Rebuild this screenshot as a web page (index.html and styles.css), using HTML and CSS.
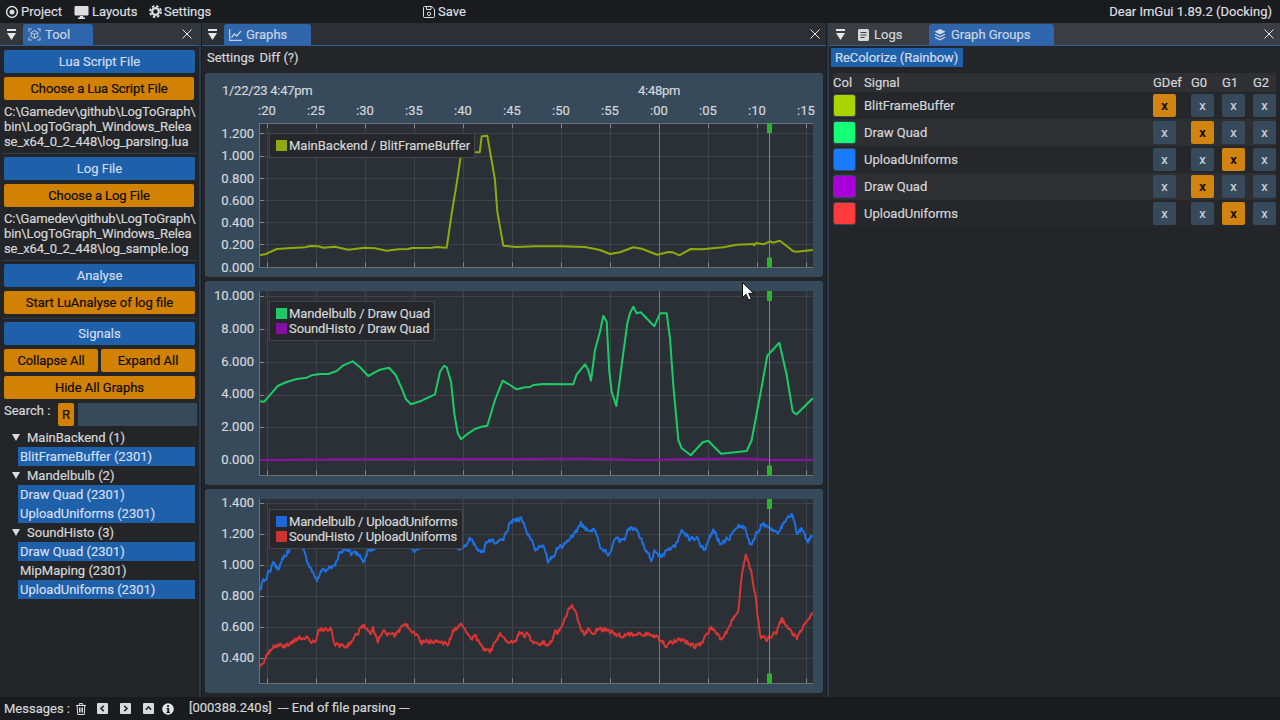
FILE: index.html
```html
<!DOCTYPE html>
<html lang="en">
<head>
<meta charset="utf-8">
<title>LogToGraph</title>
<link rel="stylesheet" href="styles.css">
</head>
<body>
<div class="menubar">
  <div class="menu-left">
    <span class="menu-item"><svg class="ic ic-project" viewBox="0 0 14 14" width="14" height="14"><circle cx="7" cy="7" r="5.4" fill="none" stroke="currentColor" stroke-width="1.5"/><circle cx="7" cy="7" r="2.5" fill="currentColor"/></svg>Project</span>
    <span class="menu-item"><svg class="ic" viewBox="0 0 15 14" width="15" height="14"><path d="M1 1.500h13v8.500H1z" fill="currentColor" stroke="currentColor"/><path d="M6 11h3l.5 1.500H11V14H4v-1.500h1.500z" fill="currentColor"/></svg>Layouts</span>
    <span class="menu-item menu-settings"><svg class="ic ic-gear" viewBox="0 0 14 14" width="13" height="13"><circle cx="7" cy="7" r="3.600" fill="none" stroke="currentColor" stroke-width="2.400"/><circle cx="7" cy="7" r="5.900" fill="none" stroke="currentColor" stroke-width="2" stroke-dasharray="2.700 1.930"/></svg>Settings</span>
  </div>
  <span class="menu-item"><svg class="ic" viewBox="0 0 12 12" width="12" height="12"><path d="M1.500.5h7.300l2.700 2.700v7.300a1 1 0 0 1-1 1h-9a1 1 0 0 1-1-1v-9a1 1 0 0 1 1-1z" fill="none" stroke="currentColor"/><path d="M3.500 1v2.500h4.500V1" fill="none" stroke="currentColor"/><circle cx="6" cy="7.800" r="1.700" fill="none" stroke="currentColor"/></svg>Save</span>
  <span class="menu-right">Dear ImGui 1.89.2 (Docking)</span>
</div>

<div class="dock">
  <section class="pane pane-tool">
    <header class="tabbar tabbar-tool">
      <svg class="tab-menu" viewBox="0 0 9 11" width="9" height="11"><path d="M0 0h9v2H0zM0 4h9L4.500 11z" fill="#e4e6e8"/></svg>
      <span class="tab tab-on tab-tool"><svg class="ic" viewBox="0 0 14 14" width="13" height="13"><path d="M1 4V1h3M10 1h3v3M13 10v3h-3M4 13H1v-3" fill="none" stroke="#b9c6d6" stroke-width="1.100"/><path d="M7 2.800l3.700 2.100v4.200L7 11.200 3.300 9.100V4.900zM3.300 4.900L7 7l3.700-2.100M7 7v4.200" fill="none" stroke="#b9c6d6" stroke-width="1.100"/></svg>Tool</span>
      <svg class="tab-close" viewBox="0 0 10 10" width="10" height="10"><path d="M.5.500l9 9M9.500.500l-9 9" stroke="#e4e6e8" fill="none"/></svg>
    </header>
    <div class="tool-body">
      <div class="btn btn-blue">Lua Script File</div>
      <div class="btn btn-orange btn-short tight">Choose a Lua Script File</div>
      <div class="path">C:\Gamedev\github\LogToGraph\<br>bin\LogToGraph_Windows_Relea<br>se_x64_0_2_448\log_parsing.lua</div>
      <div class="sep"></div>
      <div class="btn btn-blue">Log File</div>
      <div class="btn btn-orange btn-short tight">Choose a Log File</div>
      <div class="path">C:\Gamedev\github\LogToGraph\<br>bin\LogToGraph_Windows_Relea<br>se_x64_0_2_448\log_sample.log</div>
      <div class="sep"></div>
      <div class="btn btn-blue">Analyse</div>
      <div class="btn btn-orange">Start LuAnalyse of log file</div>
      <div class="sep"></div>
      <div class="btn btn-blue">Signals</div>
      <div class="btn-pair">
        <div class="btn btn-orange tight">Collapse All</div>
        <div class="btn btn-orange">Expand All</div>
      </div>
      <div class="btn btn-orange">Hide All Graphs</div>
      <div class="search">
        <span class="search-label">Search :</span>
        <span class="btn btn-orange btn-r">R</span>
        <span class="search-input"></span>
      </div>
      <div class="tree">
        <div class="tree-head"><i class="tri"></i>MainBackend (1)</div>
        <div class="leaf leaf-on">BlitFrameBuffer (2301)</div>
        <div class="tree-head"><i class="tri"></i>Mandelbulb (2)</div>
        <div class="leaf leaf-on">Draw Quad (2301)</div>
        <div class="leaf leaf-on">UploadUniforms (2301)</div>
        <div class="tree-head"><i class="tri"></i>SoundHisto (3)</div>
        <div class="leaf leaf-on">Draw Quad (2301)</div>
        <div class="leaf">MipMaping (2301)</div>
        <div class="leaf leaf-on">UploadUniforms (2301)</div>
      </div>
    </div>
  </section>

  <section class="pane pane-graphs">
    <header class="tabbar tabbar-graphs">
      <svg class="tab-menu" viewBox="0 0 9 11" width="9" height="11"><path d="M0 0h9v2H0zM0 4h9L4.500 11z" fill="#e4e6e8"/></svg>
      <span class="tab tab-on tab-graphs"><svg class="ic" viewBox="0 0 13 12" width="13" height="12"><path d="M.7 0v11.300H13" fill="none" stroke="#c4d0dd" stroke-width="1.200"/><path d="M2.500 8.500l3-3.500 2.200 2L12 2" fill="none" stroke="#c4d0dd" stroke-width="1.300"/></svg>Graphs</span>
      <svg class="tab-close" viewBox="0 0 10 10" width="10" height="10"><path d="M.5.500l9 9M9.500.500l-9 9" stroke="#e4e6e8" fill="none"/></svg>
    </header>
    <div class="graph-menu"><span>Settings</span><span>Diff (?)</span></div>
    <div class="plots">
      <article class="plot">
        <div class="dates"><span>1/22/23 4:47pm</span><span>4:48pm</span></div>
        <div class="xaxis"><span>:20</span><span>:25</span><span>:30</span><span>:35</span><span>:40</span><span>:45</span><span>:50</span><span>:55</span><span>:00</span><span>:05</span><span>:10</span><span>:15</span></div>
        <div class="plot-row">
          <div class="yaxis yaxis-a"><span>1.200</span><span>1.000</span><span>0.800</span><span>0.600</span><span>0.400</span><span>0.200</span><span>0.000</span></div>
          <div class="area area-short">
            <svg class="chart" data-chart="a" width="554" height="145" viewBox="259 123 554 145"></svg>
            <div class="legend"><div class="leg-row"><i class="sw sw-lime"></i>MainBackend / BlitFrameBuffer</div></div>
          </div>
        </div>
      </article>
      <article class="plot">
        <div class="plot-row">
          <div class="yaxis yaxis-b"><span>10.000</span><span>8.000</span><span>6.000</span><span>4.000</span><span>2.000</span><span>0.000</span></div>
          <div class="area">
            <svg class="chart" data-chart="b" width="554" height="185" viewBox="259 291 554 185"></svg>
            <div class="legend leg-mid"><div class="leg-row"><i class="sw sw-green"></i>Mandelbulb / Draw Quad</div><div class="leg-row"><i class="sw sw-purple"></i>SoundHisto / Draw Quad</div></div>
          </div>
        </div>
      </article>
      <article class="plot">
        <div class="plot-row">
          <div class="yaxis yaxis-c"><span>1.400</span><span>1.200</span><span>1.000</span><span>0.800</span><span>0.600</span><span>0.400</span></div>
          <div class="area">
            <svg class="chart" data-chart="c" width="554" height="185" viewBox="259 499 554 185"></svg>
            <div class="legend leg-tight"><div class="leg-row"><i class="sw sw-blue"></i>Mandelbulb / UploadUniforms</div><div class="leg-row"><i class="sw sw-red"></i>SoundHisto / UploadUniforms</div></div>
          </div>
        </div>
      </article>
    </div>
  </section>

  <section class="pane pane-groups">
    <header class="tabbar tabbar-groups">
      <svg class="tab-menu" viewBox="0 0 9 11" width="9" height="11"><path d="M0 0h9v2H0zM0 4h9L4.500 11z" fill="#e4e6e8"/></svg>
      <span class="tab tab-logs"><svg class="ic" viewBox="0 0 11 12" width="11" height="12"><path d="M1.500 0h8A1.500 1.500 0 0 1 11 1.500v9A1.500 1.500 0 0 1 9.500 12h-8A1.500 1.500 0 0 1 0 10.500v-9A1.500 1.500 0 0 1 1.500 0z" fill="#d6d8da"/><path d="M2.500 3.500h6M2.500 6h6M2.500 8.500h4" stroke="#3a3e42" stroke-width="1.100"/></svg>Logs</span>
      <span class="tab tab-on tab-groups"><svg class="ic" viewBox="0 0 12 12" width="12" height="12"><path d="M6 0l5.500 2.700L6 5.400.5 2.700z" fill="#d0d9e4"/><path d="M1 5.300L6 7.800l5-2.500M1 8.200L6 10.800l5-2.600" fill="none" stroke="#d0d9e4" stroke-width="1.200"/></svg>Graph Groups</span>
      <svg class="tab-close" viewBox="0 0 10 10" width="10" height="10"><path d="M.5.500l9 9M9.500.500l-9 9" stroke="#e4e6e8" fill="none"/></svg>
    </header>
    <div class="groups-body">
      <div class="recolor">ReColorize (Rainbow)</div>
      <div class="gtable">
        <div class="grow ghead"><span>Col</span><span>Signal</span><span>GDef</span><span>G0</span><span>G1</span><span>G2</span></div>
        <div class="grow"><i class="cswatch c-lime"></i><span>BlitFrameBuffer</span><b class="xb xb-on">x</b><b class="xb">x</b><b class="xb">x</b><b class="xb">x</b></div>
        <div class="grow grow-alt"><i class="cswatch c-green"></i><span>Draw Quad</span><b class="xb">x</b><b class="xb xb-on">x</b><b class="xb">x</b><b class="xb">x</b></div>
        <div class="grow"><i class="cswatch c-blue"></i><span>UploadUniforms</span><b class="xb">x</b><b class="xb">x</b><b class="xb xb-on">x</b><b class="xb">x</b></div>
        <div class="grow grow-alt"><i class="cswatch c-purple"></i><span>Draw Quad</span><b class="xb">x</b><b class="xb xb-on">x</b><b class="xb">x</b><b class="xb">x</b></div>
        <div class="grow"><i class="cswatch c-red"></i><span>UploadUniforms</span><b class="xb">x</b><b class="xb">x</b><b class="xb xb-on">x</b><b class="xb">x</b></div>
      </div>
    </div>
  </section>
</div>

<footer class="status">
  <span class="msg-label">Messages :</span>
  <svg class="st-trash" viewBox="0 0 10 12" width="10" height="12"><path d="M0 2.500h10M3.300 2.300V.6h3.400v1.700M1.200 2.500l.5 9h6.600l.5-9M3.500 4.500v5M5 4.500v5M6.500 4.500v5" fill="none" stroke="#dcdee0"/></svg>
  <span class="st-box st-b1"><svg viewBox="0 0 11 11" width="11" height="11"><path d="M6.800 2.800L4 5.500l2.800 2.700" fill="none" stroke="#26282b" stroke-width="1.600"/></svg></span>
  <span class="st-box st-b2"><svg viewBox="0 0 11 11" width="11" height="11"><path d="M4.200 2.800L7 5.500 4.200 8.200" fill="none" stroke="#26282b" stroke-width="1.600"/></svg></span>
  <span class="st-box st-b3"><svg viewBox="0 0 11 11" width="11" height="11"><path d="M2.800 6.800L5.500 4l2.700 2.800" fill="none" stroke="#26282b" stroke-width="1.600"/></svg></span>
  <svg class="st-info" viewBox="0 0 12 12" width="12" height="12"><circle cx="6" cy="6" r="5.800" fill="#e2e4e6"/><path d="M5 2.300h2v1.800H5zM4.500 5h2.700v3.700h.8V10H4.300V8.700h1V6.300h-.8z" fill="#1c1e22"/></svg>
  <span class="st-time">[000388.240s]</span>
  <span class="st-text">--- End of file parsing ---</span>
</footer>

<svg class="pointer" viewBox="0 0 12 20" width="12" height="20"><path d="M.5.500v15l3.600-3.300 2.500 5.800 2.600-1.100-2.500-5.600h4.800z" fill="#fff" stroke="#111" stroke-width="1"/></svg>
<script src="plots.js"></script>
</body>
</html>
```
FILE: styles.css
```css
* { box-sizing: border-box; }
html, body { margin: 0; padding: 0; }
body {
  width: 1280px;
  height: 720px;
  overflow: hidden;
  position: relative;
  display: flex;
  flex-direction: column;
  background: #1a1c1f;
  color: #d4d6d8;
  font: 13px/15px Roboto, "Liberation Sans", sans-serif;
  -webkit-text-stroke: 0.2px;
}
svg { display: block; flex: none; }
.ic { margin-right: 3px; }
.ic-project { margin-right: 2px; }
.ic-gear { margin-right: 2.500px; }
.tight { letter-spacing: -0.08px; }

.menubar {
  height: 23px;
  flex: none;
  display: flex;
  align-items: center;
  padding: 0 8px 0 5px;
  background: #191b1e;
  color: #dcdee0;
}
.menu-left { width: 418px; display: flex; gap: 12px; }
.menu-item { display: flex; align-items: center; }
.menu-settings { margin-left: -1px; letter-spacing: -0.05px; }
.menu-right { margin-left: auto; }

.dock { flex: none; height: 674px; display: flex; }
.pane { background: #232528; height: 100%; display: flex; flex-direction: column; }
.pane-tool { width: 201px; border-right: 2px solid #283a4d; }
.pane-graphs { width: 624px; margin: 0 1px; }
.pane-groups { flex: 1; border-left: 2px solid #283a4d; }

.tabbar {
  height: 23px;
  flex: none;
  display: flex;
  align-items: flex-end;
  position: relative;
  border-bottom: 1px solid #2d5e9e;
}
.tabbar-tool { background: #33373b; }
.tabbar-graphs { background: #2c3034; }
.tabbar-groups { background: #3a3e42; }
.tab-menu { position: absolute; left: 7px; top: 6px; }
.tabbar-graphs .tab-menu { left: 6px; }
.tab-close { position: absolute; right: 6px; top: 6px; }
.tabbar-tool .tab-close { right: 7px; }
.tab {
  height: 21px;
  display: flex;
  align-items: center;
  padding-left: 5px;
  border-radius: 3px 3px 0 0;
  color: #d4d6d8;
}
.tab-on { background: #2f66ab; color: #c9d5e3; }
.tab-tool { margin-left: 23px; width: 70px; gap: 1px; }
.tab-graphs { margin-left: 22px; width: 87px; gap: 1px; }
.tab-logs { margin-left: 29px; width: 71px; padding-left: 0; gap: 2px; }
.tab-groups { width: 125px; gap: 2px; }

.tool-body { padding: 4px 0 0 4px; display: flex; flex-direction: column; gap: 4px; }
.btn {
  height: 23px;
  width: 191px;
  border-radius: 2px;
  display: flex;
  align-items: center;
  justify-content: center;
  flex: none;
}
.btn-blue { background: #1f60ab; color: #cfdcec; }
.btn-orange { background: #d18104; color: #0d0a04; }
.btn-short { width: 190px; }
.btn-pair { display: flex; gap: 3px; }
.btn-pair .btn { width: 94px; }
.path { white-space: nowrap; height: 45px; letter-spacing: -0.11px; }
.sep { height: 1px; margin-bottom: -1px; width: 195px; margin-left: -2px; background: #2e3d4d; }

.search { display: flex; align-items: flex-start; }
.search-label { width: 54px; }
.btn-r { width: 16px; }
.search-input { width: 119px; height: 23px; margin-left: 4px; background: #364a5c; }

.tree { margin-top: -2px; }
.tree-head { height: 19px; display: flex; align-items: center; padding-left: 23px; position: relative; }
.tri {
  position: absolute;
  left: 8px;
  top: 6px;
  border: 4px solid transparent;
  border-top: 7px solid #d8dadc;
  border-bottom: 0;
}
.leaf { height: 19px; width: 177px; margin-left: 14px; padding-left: 2px; display: flex; align-items: center; }
.leaf-on { background: #1f60ab; color: #d3dfee; }

.graph-menu { height: 27px; flex: none; display: flex; gap: 5px; padding: 4px 0 0 5px; }
.plots { display: flex; flex-direction: column; gap: 4px; padding: 0 3px; }
.plot {
  height: 204px;
  background: #364a5c;
  border-radius: 3px;
  padding: 10px 0 9px;
  display: flex;
  flex-direction: column;
}
.dates { display: grid; grid-template-columns: 416px 1fr; padding-left: 17px; height: 15px; letter-spacing: -0.28px; }
.xaxis { display: flex; margin: 5px 0 5px 37.500px; height: 15px; }
.xaxis span { flex: none; width: 49px; text-align: center; }
.plot-row { display: flex; }
.yaxis { width: 54px; height: 0; padding-right: 5px; display: flex; flex-direction: column; align-items: flex-end; flex: none; }
.yaxis-a span { line-height: 22.3px; height: 22.3px; flex: none; }
.yaxis-b { margin-top: -11px; }
.yaxis-b span { line-height: 32.8px; height: 32.8px; flex: none; }
.yaxis-c { margin-top: -12px; }
.yaxis-c span { line-height: 31px; height: 31px; flex: none; }
.area { position: relative; width: 554px; height: 185px; }
.area-short { height: 145px; }
.legend {
  position: absolute;
  left: 10px;
  top: 10px;
  padding: 4px 4px 4px 6px;
  background: #25272b;
  border: 1px solid #43474c;
}
.leg-mid { letter-spacing: -0.09px; }
.leg-tight { letter-spacing: -0.19px; }
.leg-row { display: flex; align-items: center; height: 15px; white-space: nowrap; gap: 2px; }
.sw { width: 11px; height: 11px; flex: none; }
.sw-lime { background: #8fa813; }
.sw-green { background: #1fc96a; }
.sw-purple { background: #850fa0; }
.sw-blue { background: #2066d6; }
.sw-red { background: #cc3333; }

.groups-body { padding: 2px 0 0 2px; }
.recolor { width: 132px; height: 19px; background: #1f60ab; color: #cfdcec; padding-left: 4px; display: flex; align-items: center; letter-spacing: -0.05px; }
.gtable { margin: 6px 0 0 2px; width: 443px; }
.grow {
  display: grid;
  grid-template-columns: 31px 289px 38px 31px 31px 23px;
  height: 27px;
  align-items: center;
  background: #25272b;
}
.grow-alt { background: #2d2f33; }
.ghead { height: 19px; background: #2f3033; }
.cswatch { width: 23px; height: 23px; border-radius: 3px; border: 1px solid #364a5c; display: block; }
.c-lime { background: #a9d400; }
.c-green { background: #15ff77; }
.c-blue { background: #1a7bff; }
.c-purple { background: #a800d8; }
.c-red { background: #ff3b3b; }
.xb {
  width: 23px;
  height: 23px;
  border-radius: 2px;
  background: #364a5c;
  font-weight: 400;
  display: flex;
  align-items: center;
  justify-content: center;
}
.xb-on { background: #d18410; color: #0d0a04; font-weight: 500; }

.status {
  flex: none;
  height: 23px;
  display: flex;
  align-items: center;
  padding-left: 4px;
  background: #191b1e;
}
.msg-label { width: 72px; }
.st-box { width: 11px; height: 11px; background: #d8dadc; border-radius: 1px; flex: none; display: block; margin-top: -1px; }
.st-b1 { margin-left: 11px; }
.st-b2 { margin-left: 12px; }
.st-b3 { margin-left: 12px; }
.st-info { margin-left: 8px; }
.st-time { margin-left: 15px; margin-top: -3px; }
.st-text { margin-left: 6px; margin-top: -3px; }

.pointer { position: absolute; left: 742px; top: 282px; }
```
FILE: plots.js
```js
(function () {
  var NS = 'http://www.w3.org/2000/svg';
  var XT = [267.5, 316.5, 365.5, 414.5, 463.5, 512.5, 561.5, 610.5, 659.5, 708.5, 757.5, 806.5];

  var L1 = [259,255.3,265,254.3,276.7,249,291.7,248,305,247.3,310,246,318.3,246.3,323.3,247.7,335,246.7,348.3,249.7,365,247.7,375,248.3,386.7,250.7,398.3,249.3,408.3,249,411.7,248,431.7,247.7,436.7,247,446.7,247.7,451.7,213.3,456.7,183.3,461.7,150,465,135,472,151,474.3,152,479.7,152.3,481.7,136.3,487.3,135.7,495,180,497.3,211.7,503.3,245.7,516.7,247,535,246.3,561,246.3,585,247,600,250,610,254,620,252.3,633.3,247.3,641.7,248.7,657.3,254.7,668.3,252,673,252.300,679.3,255.3,690.7,249,701.7,249.3,723.3,247.3,736.7,244.7,753.3,244,754.300,245.300,756,243,763.3,244.3,770,241.3,772.700,242.700,780,240.7,793.3,251.3,796.7,251.7,812.7,250];
  var L2 = [259.3,401.3,264.3,401.7,277.7,386,286.7,382,296.7,379,306.7,377.7,311.7,375.3,320,374,328.3,374,336.7,371,343.3,365.3,352.7,361.3,360,367.3,368.3,376,380,369.7,389,367.7,395.7,375,401.7,388.3,406,399.3,411,404.3,421.7,400.7,435,394.3,440,371.7,444,365.7,446.7,367.3,451,381.7,454.3,413.3,457.7,433.3,461,439.3,468.3,433.3,475,429,481.7,426.7,487.3,425.7,495,400,502.7,380.7,510,385,516.7,389.3,525,387.3,530,387,533.3,385,543.3,384,573.3,384.3,576.7,374.3,585,364.3,588.3,370,591,380.7,595,350,600,331.7,603.3,315.7,606.7,321.7,609.3,371.7,611.7,391.7,616.3,406,621.7,365,627.3,323.3,630,313.3,633.3,306.7,636.7,313.3,640.7,312.3,654.3,326.3,660,313.3,666.7,313.3,670,338.3,673.3,385,678.3,440,681.7,448.3,690.7,455.3,702.7,442.3,708.3,440.7,721,453.7,746.7,451,751.7,440,761.7,386.7,767.3,355.7,779.3,342.7,786.7,375,792.7,411.7,796.7,414.3,812.7,398.3];
  var L3 = [259,460,330,459.500,420,459,520,459,580,458.500,640,460,700,459,750,458.500,770,460,812.700,459.700];
  var L4 = [259.3,590,268.3,573.3,273.3,564,278.3,568.3,284.3,555,289,550,295,537,303.3,550,310,568.3,316.7,582,321.7,570,335,566,340,553.3,346.7,548,351.7,553,360,555,362.7,563.3,368.3,550,373.3,548,388,533,415,550,440,535,456.7,549,463.3,546.7,470,540,476.7,548.3,483.3,552.7,486.7,541.7,500,542.3,505,535,510,521.7,521.7,518.3,526.7,530,531.7,541.7,536.7,550,543.3,545,548.3,562.7,556.7,550,570,540,581,524.3,590,533.3,594,526,600,545,608.3,555,615,540,625,540.7,628.3,528.3,636.7,531.7,651.7,559.3,655,550,659.3,557.3,675,545,683.3,530,690,540,696.7,536.7,704.3,550,713.3,529.3,720,543.3,730,536.7,736,525,745,528.3,750,545,761.7,524.3,770,526.7,778.3,535,783.3,523.3,792.7,515,796.7,535,801.7,528.3,806.7,540.7,812.7,536.7];
  var L5 = [259.3,668.3,266.7,656.7,273.3,646,286.7,646,295,640,305,636.7,315,644,319,628.3,331.7,630,334.3,644,346.7,646.7,355,636.7,363.3,624.3,370,635,372.7,628.3,377.7,641.7,383.3,631.7,395,635,405,624.3,415,633.3,421.7,642.7,435,640.7,448.3,645,452.3,631.7,462.3,624,470,638.3,475,636.7,483.3,648.3,490,651.7,500,635,508.3,640.7,515,640.7,520,633,528.3,635,531.7,641.7,550,643.3,555,633.3,560,630,565,615,572.7,606,579.3,623.3,585,636.7,588.3,630,591.7,634,596.7,629,608.3,630,620,636,636.7,633.3,651.7,634,666.7,645,680,638.3,693.3,646,701.7,644,711.7,626.7,720,638.3,725,635,733.3,618.3,738.3,610,741.7,576.7,746,555,751.7,573.3,755,591.7,760,636.7,766.7,640,776.7,631.7,781.7,620,790,630,796.7,638.3,805,623.3,812.7,611.7];

  var CHARTS = {
    a: { top: 123, bottom: 267.5, topAxis: true, yt: [133.5,156.5,178.5,200.5,222.5,244.5],
         lines: [{ pts: L1, color: '#90aa0c' }] },
    b: { top: 291, bottom: 475.5, topAxis: false, yt: [296.5,329.5,362.5,395.5,427.5,460.5],
         lines: [{ pts: L2, color: '#1ccb68' }, { pts: L3, color: '#8c10a8' }] },
    c: { top: 499, bottom: 683.5, topAxis: false, yt: [503.5,534.5,565.5,596.5,627.5,658.5],
         lines: [{ pts: L4, color: '#1f70e0', noise: 2.4 }, { pts: L5, color: '#d93535', noise: 2.2 }] }
  };

  function el(svg, name, attrs) {
    var n = document.createElementNS(NS, name);
    for (var k in attrs) n.setAttribute(k, attrs[k]);
    svg.appendChild(n);
  }
  function line(svg, x1, y1, x2, y2, color) {
    el(svg, 'line', { x1: x1, y1: y1, x2: x2, y2: y2, stroke: color, 'stroke-width': 1 });
  }
  // Small seeded generator so the noisy traces come out the same every time.
  var seed = 12345;
  function rnd() { seed = (seed * 16807) % 2147483647; return seed / 2147483647; }

  function jitter(pts, amp) {
    var out = [], walk = 0, i = 0;
    for (var x = pts[0]; x <= pts[pts.length - 2]; x += 0.8) {
      while (i + 3 < pts.length && pts[i + 2] < x) i += 2;
      var t = (x - pts[i]) / ((pts[i + 2] - pts[i]) || 1);
      var y = pts[i + 1] + (pts[i + 3] - pts[i + 1]) * t;
      walk = walk * 0.35 + (rnd() - 0.5) * amp * 2;
      out.push(x.toFixed(1) + ',' + (y + walk).toFixed(1));
    }
    return out.join(' ');
  }
  function plain(pts) {
    var out = [];
    for (var i = 0; i < pts.length; i += 2) out.push(pts[i] + ',' + pts[i + 1]);
    return out.join(' ');
  }

  document.querySelectorAll('.chart').forEach(function (svg) {
    var c = CHARTS[svg.getAttribute('data-chart')];
    el(svg, 'rect', { x: 259, y: c.top, width: 554, height: c.bottom - c.top + 0.5, fill: '#2b3036' });
    c.yt.forEach(function (y) {
      line(svg, 259, y, 813, y, '#3d4248');
      line(svg, 259, y, 264, y, '#80868c');
    });
    XT.forEach(function (x) {
      line(svg, x, c.top, x, c.bottom, x === 659.5 ? '#72777c' : '#3f444a');
      line(svg, x, c.bottom - 5, x, c.bottom, '#80868c');
      if (c.topAxis) line(svg, x, c.top, x, c.top + 5, '#80868c');
    });
    c.lines.forEach(function (l) {
      el(svg, 'polyline', {
        points: l.noise ? jitter(l.pts, l.noise) : plain(l.pts),
        fill: 'none', stroke: l.color, 'stroke-width': 2, 'stroke-linejoin': 'round'
      });
    });
    line(svg, 259.5, c.top, 259.5, c.bottom, '#6b7278');
    line(svg, 259, c.bottom, 813, c.bottom, '#6b7278');
    if (c.topAxis) line(svg, 259, c.top + 0.5, 813, c.top + 0.5, '#6b7278');
    line(svg, 769.5, c.top, 769.5, c.bottom, '#3fb53f');
    el(svg, 'rect', { x: 767, y: c.top, width: 5, height: 10, fill: '#2fb22f' });
    el(svg, 'rect', { x: 767, y: c.bottom - 10, width: 5, height: 10.5, fill: '#2fb22f' });
  });
})();
```
